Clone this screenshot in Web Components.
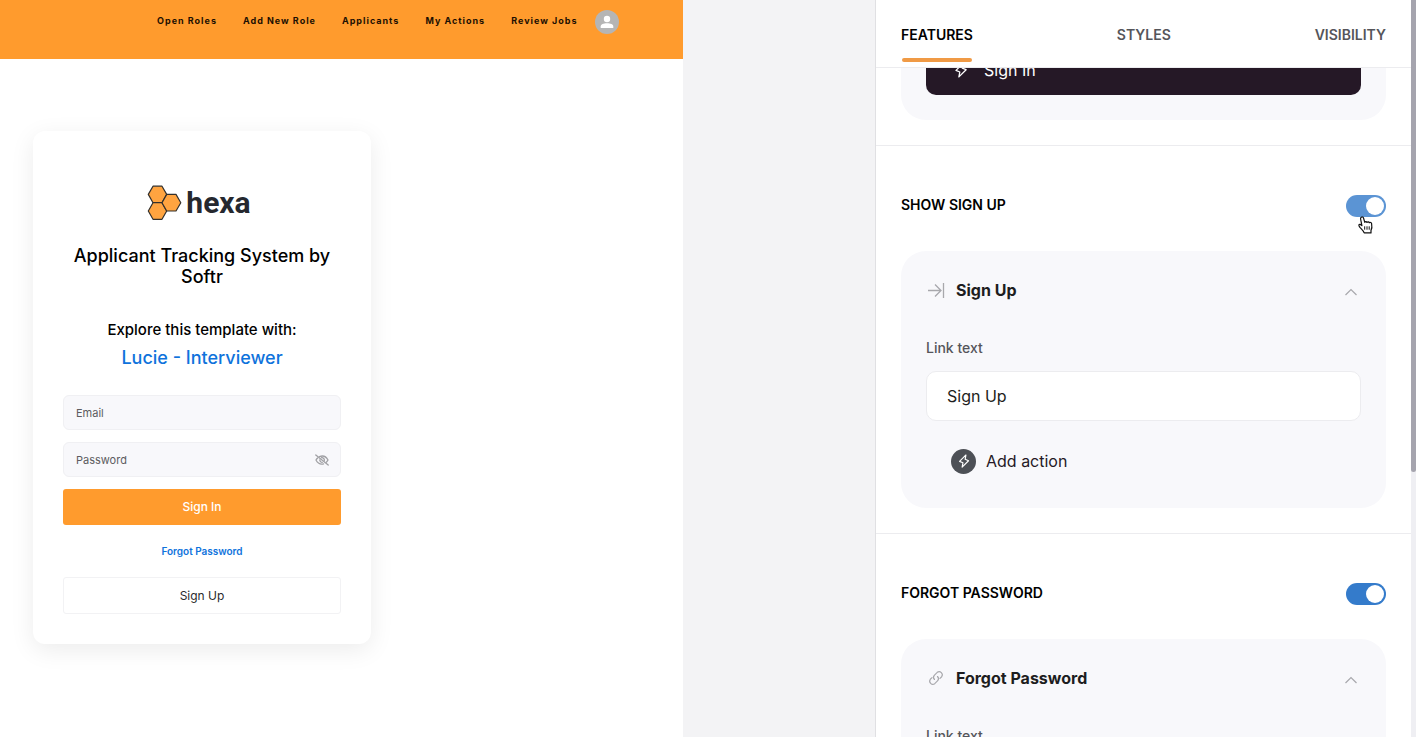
<!DOCTYPE html>
<html lang="en">
<head>
<meta charset="utf-8">
<title>Softr Studio</title>
<style>
  body {
    margin: 0;
    font-family: Inter, "Liberation Sans", sans-serif;
    color: #000;
  }
</style>
</head>
<body>
<studio-shell>
  <site-preview slot="preview">
    <site-header>
      <a href="#roles">Open Roles</a>
      <a href="#new-role">Add New Role</a>
      <a href="#applicants">Applicants</a>
      <a href="#actions">My Actions</a>
      <a href="#jobs">Review Jobs</a>
    </site-header>
    <login-card></login-card>
  </site-preview>

  <settings-panel slot="panel">
    <settings-section>
      <dark-action>Sign In</dark-action>
    </settings-section>
    <settings-section heading="Show sign up" hovered>
      <link-card heading="Sign Up" icon="enter" value="Sign Up"></link-card>
    </settings-section>
    <settings-section heading="Forgot password">
      <link-card heading="Forgot Password" icon="link" value="Forgot Password"></link-card>
    </settings-section>
  </settings-panel>
</studio-shell>

<script>
const icons = {
  enter: `<svg width="20" height="20" viewBox="0 0 20 20" fill="none" stroke="#a8a8ac" stroke-width="1.3">
    <path d="M2 10.5h13M9 4.500l6 6-6 6M17.500 3v15"/></svg>`,
  link: `<svg width="20" height="20" viewBox="-2 -2 24 24" fill="none" stroke="#a8a8ac" stroke-width="1.4" stroke-linecap="round">
    <path d="M8.200 11.800a3.800 3.800 0 0 1 0-5.300l3.300-3.300a3.800 3.800 0 0 1 5.300 5.300l-2 2"/>
    <path d="M11.800 8.200a3.800 3.800 0 0 1 0 5.300l-3.300 3.300a3.800 3.800 0 0 1-5.300-5.300l2-2"/></svg>`,
  chevron: `<svg width="14" height="10" viewBox="0 0 14 10" fill="none" stroke="#a8a8ac" stroke-width="1.2">
    <path d="M1.500 8L7 2.500 12.500 8"/></svg>`,
  bolt: `<svg width="18" height="18" viewBox="0 0 18 18" fill="none" stroke="#fff" stroke-width="1.300" stroke-linejoin="round">
    <path d="M11.200 2.200L4 9.400l3.800 1.600-.9 4.900 7.200-7.200-3.800-1.600z"/></svg>`,
  hand: `<svg width="18" height="20" viewBox="0 0 18 20" fill="#fff" stroke="#111" stroke-width="1.2" stroke-linejoin="round">
    <path d="M4.300 2.200c.9-.7 1.900-.2 2.200.8l1.300 4.400c.3-1 1.700-1.100 2.200 0 .6-.8 1.900-.7 2.300.3.800-.7 2.100-.2 2.300.9.400 2.200.7 4.600-.6 6.800v2.500H7.200c-.6-2-2.600-3.600-4-5.200-.9-1.100-1.700-2-1.300-2.900.6-.9 1.800-.4 3 .9L3.600 4c-.2-.7 0-1.400.7-1.800z"/>
    <path d="M7.700 11.300v3.400M10 11.300v3.400M12.200 11.300v3.400" stroke-width="1"/></svg>`,
  user: `<svg width="14" height="14" viewBox="0 0 14 14" fill="#fff">
    <circle cx="7" cy="4" r="3.200"/><path d="M.700 13v-1.500C.700 9.500 3.500 8.300 7 8.300s6.300 1.200 6.300 3.200V13z"/></svg>`,
  eyeOff: `<svg width="14" height="12" viewBox="0 0 14 12" fill="none" stroke="#a0a0a4" stroke-width="1.300" stroke-linecap="round">
    <path d="M4.500 2.600C9 .9 11.500 3.200 13 6c-.4.800-1 1.600-1.700 2.200M2.600 4C2 4.600 1.400 5.300 1 6c1.500 3 4.300 4.600 7.600 3.900"/>
    <path d="M6.600 3.700a2.400 2.400 0 0 1 2.700 2.900M4.800 5.800a2.400 2.400 0 0 0 2.500 2.500"/>
    <path d="M.8.900l12.400 10.200"/></svg>`,
  hexagons: `<svg width="36" height="36" viewBox="0 0 36 36" fill="#ffa440" stroke="#33302c" stroke-width="1.200" stroke-linejoin="round">
    <path d="M6 1.200h9l4.700 8.200L15 17.700H6L1.300 9.400z"/>
    <path d="M6 17.700h9l4.700 8.300L15 34.300H6L1.300 26z"/>
    <path d="M19.700 9.400h9.300l4.800 8.300-4.800 8.300h-9.300L15 17.700z"/></svg>`
};

class StudioShell extends HTMLElement {
  constructor() {
    super();
    this.attachShadow({ mode: 'open' }).innerHTML = `
      <style>
        :host {
          display: flex;
          height: 100vh;
          overflow: hidden;
          background: #f3f3f5;
        }
        .canvas {
          flex: 1;
          min-width: 0;
          display: flex;
        }
      </style>
      <div class="canvas"><slot name="preview"></slot></div>
      <slot name="panel"></slot>
    `;
  }
}

class SitePreview extends HTMLElement {
  constructor() {
    super();
    this.attachShadow({ mode: 'open' }).innerHTML = `
      <style>
        :host {
          display: block;
          width: 78%;
          background: #fff;
        }
      </style>
      <slot></slot>
    `;
  }
}

class SiteHeader extends HTMLElement {
  constructor() {
    super();
    this.attachShadow({ mode: 'open' }).innerHTML = `
      <style>
        :host {
          display: flex;
          justify-content: flex-end;
          align-items: center;
          gap: 17px;
          padding: 10px 64px 25px;
          background: #ff9b2d;
        }
        nav {
          display: flex;
          gap: 26px;
          padding-bottom: 2px;
        }
        ::slotted(a) {
          color: #1c0f02;
          font-size: 9px;
          font-weight: 700;
          line-height: 12px;
          letter-spacing: 1px;
          text-decoration: none;
          white-space: nowrap;
        }
        button {
          display: flex;
          align-items: center;
          justify-content: center;
          width: 24px;
          height: 24px;
          padding: 0;
          border: none;
          border-radius: 50%;
          background: #b5b5b5;
        }
      </style>
      <nav><slot></slot></nav>
      <button aria-label="Account">${icons.user}</button>
    `;
  }
}

class LoginCard extends HTMLElement {
  constructor() {
    super();
    this.attachShadow({ mode: 'open' }).innerHTML = `
      <style>
        :host {
          display: block;
          box-sizing: border-box;
          max-width: 338px;
          margin: 72px 33px 0;
          padding: 54px 30px 30px;
          border-radius: 12px;
          background: #fff;
          box-shadow: 0 6px 24px rgba(0, 0, 0, 0.08);
          text-align: center;
        }
        .logo {
          display: flex;
          align-items: center;
          justify-content: center;
          gap: 3px;
          height: 36px;
          padding-right: 6px;
          color: #25282f;
          font: 700 30px/36px Roboto, sans-serif;
        }
        h1 {
          margin: 24px 0 0;
          font-size: 18px;
          font-weight: 500;
          line-height: 21px;
        }
        h2 {
          margin: 32px 0 0;
          font-size: 15px;
          font-weight: 500;
          line-height: 22px;
        }
        a {
          display: block;
          color: #0f73dc;
          text-decoration: none;
        }
        .user {
          margin-top: 5px;
          font-size: 18px;
          font-weight: 500;
          line-height: 24px;
        }
        form {
          display: grid;
          gap: 12px;
          margin-top: 25px;
        }
        .field {
          display: flex;
          align-items: center;
          height: 33px;
          padding: 0 11px 0 12px;
          border: 1px solid #f0f0f3;
          border-radius: 6px;
          background: #f8f8fb;
        }
        input {
          flex: 1;
          min-width: 0;
          padding: 0;
          border: none;
          outline: none;
          background: none;
          font: 400 11px/16px Inter, sans-serif;
        }
        input::placeholder {
          color: #5c5c60;
        }
        .eye {
          display: flex;
          padding: 0;
          border: none;
          background: none;
        }
        .submit, .signup {
          height: 36px;
          padding: 0;
          border: none;
          border-radius: 3px;
          font: 500 12px/16px Inter, sans-serif;
        }
        .submit {
          background: #ff9b2d;
          color: #fff;
        }
        .forgot {
          margin: 6px 0;
          font-size: 10px;
          font-weight: 600;
          line-height: 16px;
        }
        .signup {
          height: 37px;
          border: 1px solid #f2f2f4;
          background: #fff;
          color: #2a2a2c;
          font-weight: 400;
        }
      </style>
      <div class="logo">${icons.hexagons}<span>hexa</span></div>
      <h1>Applicant Tracking System by Softr</h1>
      <h2>Explore this template with:</h2>
      <a class="user" href="#lucie">Lucie - Interviewer</a>
      <form>
        <div class="field"><input type="email" placeholder="Email" aria-label="Email"></div>
        <div class="field">
          <input type="password" placeholder="Password" aria-label="Password">
          <button class="eye" type="button" aria-label="Show password">${icons.eyeOff}</button>
        </div>
        <button class="submit" type="button">Sign In</button>
        <a class="forgot" href="#forgot">Forgot Password</a>
        <button class="signup" type="button">Sign Up</button>
      </form>
    `;
  }
}

class ToggleSwitch extends HTMLElement {
  connectedCallback() {
    const hovered = this.hasAttribute('hovered');
    this.attachShadow({ mode: 'open' }).innerHTML = `
      <style>
        :host {
          display: block;
          position: relative;
          height: 22px;
        }
        input {
          appearance: none;
          display: flex;
          align-items: center;
          box-sizing: border-box;
          width: 40px;
          height: 22px;
          margin: 0;
          padding: 0 2px;
          border-radius: 11px;
          background: #c8c8cc;
        }
        input::before {
          content: "";
          width: 18px;
          height: 18px;
          border-radius: 50%;
          background: #fff;
        }
        input:checked {
          justify-content: flex-end;
          background: #347bcb;
        }
        :host([hovered]) input:checked {
          background: #5b94d4;
        }
        .pointer {
          position: absolute;
          left: 11px;
          top: 20px;
          pointer-events: none;
        }
      </style>
      <input type="checkbox" checked aria-label="${this.getAttribute('label')}">
      ${hovered ? `<div class="pointer">${icons.hand}</div>` : ''}
    `;
  }
}

class DarkAction extends HTMLElement {
  constructor() {
    super();
    this.attachShadow({ mode: 'open' }).innerHTML = `
      <style>
        :host {
          display: block;
          padding: 25px;
          border-radius: 25px;
          background: #f8f8fb;
        }
        button {
          display: flex;
          align-items: center;
          gap: 14px;
          width: 100%;
          height: 50px;
          padding: 0 26px;
          border: none;
          border-radius: 10px;
          background: #251826;
          color: #fff;
          font: 400 16px/24px Inter, sans-serif;
        }
      </style>
      <button>${icons.bolt}<slot></slot></button>
    `;
  }
}

class LinkCard extends HTMLElement {
  connectedCallback() {
    this.attachShadow({ mode: 'open' }).innerHTML = `
      <style>
        :host {
          display: block;
          padding: 25px;
          border-radius: 25px;
          background: #f8f8fb;
        }
        header {
          display: flex;
          align-items: center;
          gap: 10px;
          height: 28px;
        }
        header svg {
          display: block;
        }
        h3 {
          flex: 1;
          margin: 0;
          color: #1d1d20;
          font-size: 16px;
          font-weight: 700;
          line-height: 24px;
        }
        .collapse {
          padding: 4px 3px 0;
          border: none;
          background: none;
        }
        label {
          display: block;
          margin: 34px 0 13px;
          color: #55555a;
          font-size: 14px;
          font-weight: 500;
          line-height: 20px;
        }
        input {
          display: block;
          box-sizing: border-box;
          width: 100%;
          height: 50px;
          padding: 0 20px;
          border: 1px solid #ececef;
          border-radius: 10px;
          background: #fff;
          color: #1d1d20;
          font: 400 16px/24px Inter, sans-serif;
        }
        .add {
          display: flex;
          align-items: center;
          gap: 10px;
          height: 44px;
          margin-top: 18px;
          padding: 0 25px;
          border: none;
          background: none;
          color: #251826;
          font: 400 16px/24px Inter, sans-serif;
        }
        .disc {
          display: flex;
          align-items: center;
          justify-content: center;
          width: 25px;
          height: 25px;
          border-radius: 50%;
          background: #4d5056;
        }
        .disc svg {
          width: 16px;
          height: 16px;
        }
      </style>
      <header>
        ${icons[this.getAttribute('icon')]}
        <h3>${this.getAttribute('heading')}</h3>
        <button class="collapse" aria-label="Collapse">${icons.chevron}</button>
      </header>
      <label for="text">Link text</label>
      <input id="text" type="text" value="${this.getAttribute('value')}">
      <button class="add"><span class="disc">${icons.bolt}</span>Add action</button>
    `;
  }
}

class SettingsSection extends HTMLElement {
  connectedCallback() {
    const heading = this.getAttribute('heading');
    const hovered = this.hasAttribute('hovered') ? 'hovered' : '';
    this.attachShadow({ mode: 'open' }).innerHTML = `
      <style>
        :host {
          display: block;
          padding: 0 25px 25px;
          border-bottom: 1px solid #ececef;
        }
        .head {
          display: flex;
          justify-content: space-between;
          align-items: flex-start;
          padding: 49px 0 34px;
        }
        h2 {
          margin: 0;
          font-size: 14px;
          font-weight: 600;
          line-height: 20px;
          text-transform: uppercase;
        }
      </style>
      ${heading ? `<div class="head"><h2>${heading}</h2><toggle-switch label="${heading}" ${hovered}></toggle-switch></div>` : ''}
      <slot></slot>
    `;
  }
}

class SettingsPanel extends HTMLElement {
  constructor() {
    super();
    this.attachShadow({ mode: 'open' }).innerHTML = `
      <style>
        :host {
          display: grid;
          grid-template: auto minmax(0, 1fr) / minmax(0, 1fr) 5px;
          flex: 0 0 540px;
          border-left: 1px solid #e0e0e3;
          background: #fff;
        }
        nav {
          display: flex;
          justify-content: space-between;
          padding: 25px 25px 5px;
          border-bottom: 1px solid #ececef;
        }
        button {
          display: block;
          padding: 0 0 13px;
          border: none;
          background: none;
          color: #55555a;
          font: 600 14px/20px Inter, sans-serif;
        }
        button::after {
          content: "";
          display: block;
          height: 4px;
          margin: 13px 1px -13px;
          border-radius: 2px;
        }
        .active {
          color: #000;
        }
        .active::after {
          background: #f09a45;
        }
        .body {
          overflow-y: auto;
          scrollbar-width: none;
        }
        .track {
          grid-area: 1 / 2 / 3 / 3;
          background: #efeff3;
        }
        .thumb {
          height: 64%;
          border-radius: 0 0 3px 3px;
          background: #a5a4ae;
        }
      </style>
      <nav>
        <button class="active">FEATURES</button>
        <button>STYLES</button>
        <button>VISIBILITY</button>
      </nav>
      <div class="track"><div class="thumb"></div></div>
      <div class="body"><slot></slot></div>
    `;
  }

  connectedCallback() {
    this.shadowRoot.querySelector('.body').scrollTop = 48;
  }
}

customElements.define('studio-shell', StudioShell);
customElements.define('site-preview', SitePreview);
customElements.define('site-header', SiteHeader);
customElements.define('login-card', LoginCard);
customElements.define('toggle-switch', ToggleSwitch);
customElements.define('dark-action', DarkAction);
customElements.define('link-card', LinkCard);
customElements.define('settings-section', SettingsSection);
customElements.define('settings-panel', SettingsPanel);
</script>
</body>
</html>
